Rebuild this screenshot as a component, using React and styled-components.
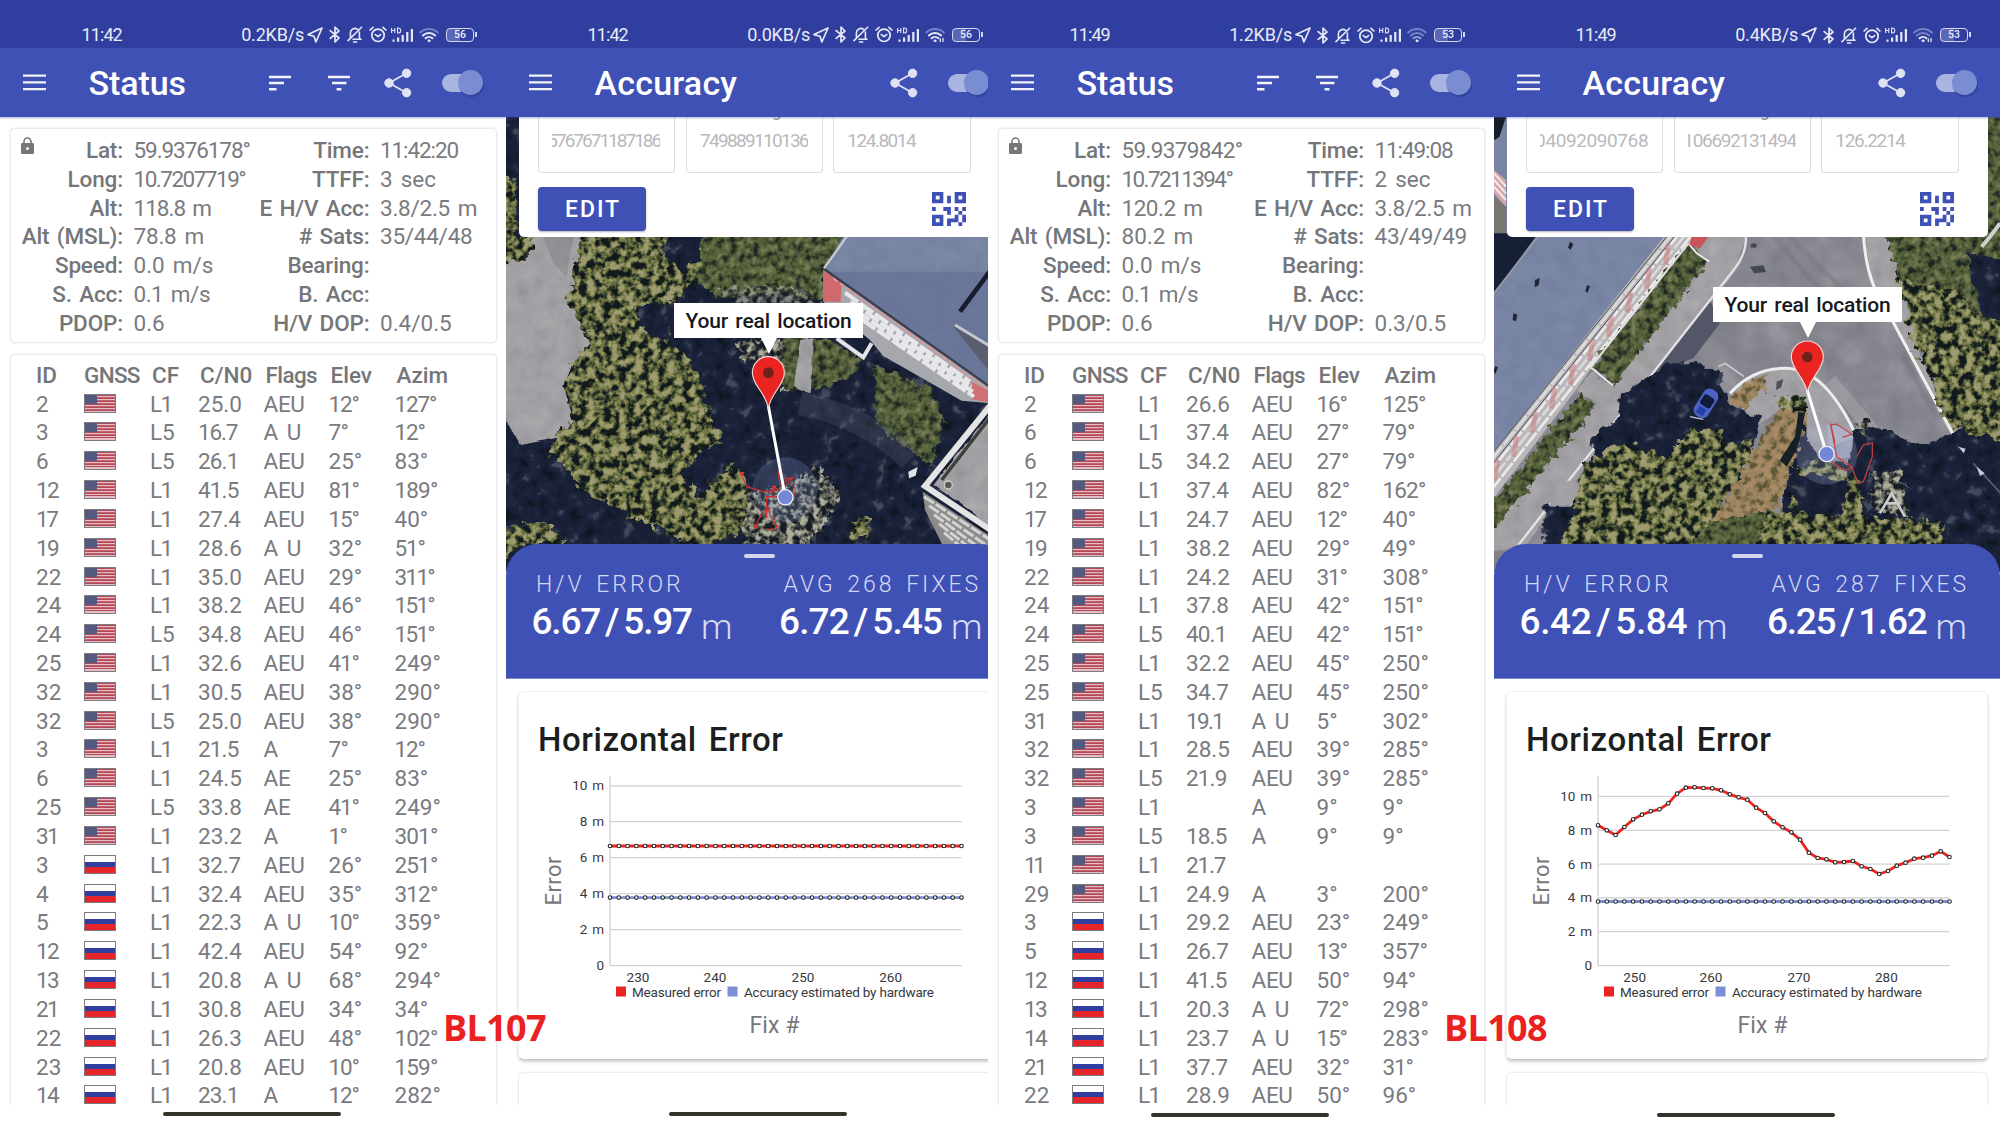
import React from "react";
import styled, { createGlobalStyle } from "styled-components";

const Global = createGlobalStyle`
  * { box-sizing: border-box; }
  html, body { margin: 0; padding: 0; background: #fff; }
  body { font-family: Roboto, "Open Sans", sans-serif; color: #6f7073; overflow: hidden; }
  svg { display: block; flex: none; }
`;

const Board = styled.main`
  display: flex;
  position: relative;
  width: 2000px;
  height: 1125px;
  overflow: hidden;
`;

const Phone = styled.section`
  display: flex;
  flex-direction: column;
  flex: none;
  width: ${(p) => p.$width}px;
  height: 1125px;
  overflow: hidden;
  background: #fff;
`;

const Screen = styled.div`
  display: flex;
  flex-direction: column;
  flex: none;
  width: 506px;
  height: 1105px;
  overflow: hidden;
`;

/* ---------- status bar ---------- */

const StatusBar = styled.header`
  display: flex;
  align-items: center;
  flex: none;
  height: 48px;
  padding: ${(p) => (p.$low ? 22.5 : 21)}px 29px 0 81.5px;
  background: #303f9f;
  color: #e9ebf5;
  font-size: 18px;
  line-height: 26px;
`;

const Clock = styled.span`
  letter-spacing: -0.9px;
`;

const Speed = styled.span`
  margin-left: auto;
  margin-right: 3px;
  letter-spacing: -0.2px;
`;

const Tray = styled.div`
  display: flex;
  align-items: center;
`;

const TrayItem = styled.span`
  display: flex;
  margin-left: ${(p) => p.$gap || 0}px;
`;

const Battery = styled.span`
  display: flex;
  align-items: center;
  justify-content: center;
  position: relative;
  width: 28px;
  height: 14px;
  margin: 0 3px 0 7px;
  border: 1.5px solid #d5d8ee;
  border-radius: 4px;
  background: linear-gradient(90deg, #5a67b6 50%, transparent 50%);
  font-size: 10.5px;
  font-weight: 500;
  line-height: 10px;
  &::after {
    content: "";
    position: absolute;
    right: -4px;
    top: 3px;
    width: 2px;
    height: 5px;
    background: #d5d8ee;
  }
`;

/* ---------- app bar ---------- */

const AppBar = styled.div`
  display: flex;
  align-items: center;
  flex: none;
  position: relative;
  z-index: 2;
  height: 69px;
  padding: 0 24px 0 23px;
  background: #3f51b5;
  box-shadow: 0 1px 2px rgba(63, 81, 181, 0.45);
`;

const Title = styled.h1`
  margin: 1.5px auto 0 42.5px;
  color: #fff;
  font-size: 34px;
  font-weight: 500;
  line-height: 67.5px;
  letter-spacing: ${(p) => p.$track || 0}px;
`;

const Action = styled.span`
  display: flex;
  margin-left: ${(p) => p.$gap}px;
`;

const Toggle = styled.span`
  display: flex;
  align-items: center;
  justify-content: flex-end;
  width: 37px;
  height: 18px;
  margin: 0 3.5px 0 29.5px;
  border-radius: 9px;
  background: #aab4e1;
`;

const Thumb = styled.span`
  width: 25px;
  height: 25px;
  flex: none;
  margin-right: -4px;
  border-radius: 50%;
  background: #7b8dd2;
  box-shadow: 1px 2px 1px #32429f;
`;

/* ---------- status page ---------- */

const StatusBody = styled.div`
  display: flex;
  flex-direction: column;
  gap: 11px;
  flex: 1;
  min-height: 0;
  padding: 11px 9.5px 0 10px;
`;

const Panel = styled.div`
  border: 1px solid #ececef;
  border-radius: 5px;
  box-shadow: 0 0 2px rgba(0, 0, 0, 0.14);
  background: #fff;
`;

const InfoPanel = styled(Panel)`
  position: relative;
  height: 215px;
  padding-top: 7px;
`;

const LockIcon = styled.svg`
  position: absolute;
  left: 10px;
  top: 8px;
`;

const InfoColumns = styled.div`
  display: grid;
  grid-template-columns: 112px minmax(0, 1fr) 120px ${(p) => p.$last}px;
  grid-auto-rows: 28.83px;
`;

const InfoLabel = styled.span`
  display: flex;
  justify-content: flex-end;
  font-size: 22.5px;
  font-weight: 500;
  line-height: 29px;
  letter-spacing: -0.15px;
  word-spacing: 2px;
  white-space: pre;
  color: #757679;
`;

const InfoValue = styled.span`
  padding-left: 10.5px;
  font-size: 22.5px;
  line-height: 29px;
  letter-spacing: ${(p) => p.$track}px;
  word-spacing: 2.5px;
  white-space: pre;
  color: #7a7b7f;
`;

const TablePanel = styled(Panel)`
  flex: 1;
  min-height: 0;
  padding-top: 5.3px;
  border-bottom: none;
  border-radius: 5px 5px 0 0;
`;

const SatRow = styled.div`
  display: grid;
  grid-template-columns: 48px 66px 48px 65.5px 65px 66px 1fr;
  align-items: center;
  height: 28.83px;
  padding-left: 25px;
`;

const Cell = styled.span`
  font-size: 22.5px;
  line-height: 28px;
  letter-spacing: ${(p) => p.$track}px;
  word-spacing: 3.5px;
  white-space: pre;
  color: #7a7b7f;
`;

const HeadCell = styled.span`
  margin-left: ${(p) => p.$shift || 0}px;
  font-size: 22.5px;
  font-weight: 500;
  line-height: 28px;
  letter-spacing: ${(p) => p.$track || 0}px;
  white-space: nowrap;
  color: #757679;
`;

const FlagBox = styled.span`
  display: block;
  width: 32px;
  height: 19px;
  margin-top: -1px;
  border: 1px solid #7b7b80;
  background: ${(p) =>
    p.$country === "us"
      ? `linear-gradient(#54597f, #54597f) 0 0 / 12px 9px no-repeat,
         repeating-linear-gradient(180deg, #b04a58 0 1px, #e7bcc2 1px 2.3px, #c0616d 2.3px 2.9px)`
      : `linear-gradient(180deg, #fff 0 34%, #303f9f 34% 66%, #e5252a 66%)`};
`;

const NavArea = styled.footer`
  display: flex;
  flex: none;
  width: 506px;
  height: 20px;
  padding: ${(p) => (p.$low ? 8 : 7)}px 0 0 163px;
  background: #fff;
`;

const NavPill = styled.span`
  width: 178px;
  height: 4px;
  border-radius: 2px;
  background: #30352c;
`;

/* ---------- accuracy page ---------- */

const MapArea = styled.div`
  position: relative;
  flex: none;
  height: 455px;
`;

const MapArt = styled.svg`
  position: absolute;
  inset: 0;
`;

const TruthCard = styled.div`
  position: relative;
  width: 481px;
  height: 120px;
  margin-left: 12.5px;
  padding: 0 29px 0 19.5px;
  border-radius: 0 0 5px 5px;
  background: #fff;
`;

const Fields = styled.div`
  display: flex;
  gap: 10.5px;
  height: 56px;
`;

const Field = styled.div`
  flex: 1;
  min-width: 0;
  padding: 11px 14px 0 13px;
  border: 1.5px solid #dedee1;
  border-top: none;
  border-radius: 0 0 4px 4px;
  position: relative;
`;

const FieldText = styled.span`
  display: flex;
  justify-content: ${(p) => (p.$end ? "flex-end" : "flex-start")};
  overflow: hidden;
  font-size: 19px;
  line-height: 26px;
  letter-spacing: ${(p) => p.$track}px;
  color: #b9b9bd;
`;

const Caption = styled.span`
  position: absolute;
  left: 25px;
  top: -17px;
  font-size: 17px;
  line-height: 22px;
  white-space: nowrap;
  color: #8c8c90;
`;

const CardActions = styled.div`
  display: flex;
  align-items: center;
  justify-content: space-between;
  padding: 14px 5px 0 0;
`;

const EditButton = styled.button`
  width: 108px;
  height: 44px;
  padding: 1px 0 0 2px;
  border: none;
  border-radius: 4px;
  background: #3f51b5;
  box-shadow: 0 1px 2px rgba(0, 0, 0, 0.3);
  color: #fff;
  font: 500 23px/44px Roboto, sans-serif;
  letter-spacing: 2px;
`;

const Callout = styled.div`
  position: absolute;
  left: ${(p) => p.$x}px;
  top: ${(p) => p.$y}px;
  width: 189px;
  height: 35.5px;
  background: #fff;
  color: #17191c;
  font-size: 21px;
  font-weight: 500;
  line-height: 36px;
  text-align: center;
  white-space: nowrap;
  letter-spacing: -0.15px;
  word-spacing: 2.2px;
  &::after {
    content: "";
    position: absolute;
    left: 86.5px;
    top: 35px;
    border: 8px solid transparent;
    border-top: 16px solid #fff;
    border-bottom: none;
  }
`;

const Sheet = styled.div`
  position: relative;
  z-index: 1;
  flex: none;
  height: 135px;
  margin-top: -28.5px;
  padding-top: 10.5px;
  border-radius: 32px 32px 0 0;
  background: #3f51b5;
  border-bottom: 1px solid #7f8bd0;
`;

const Handle = styled.span`
  display: block;
  width: 31px;
  height: 4px;
  margin: 0 auto;
  border-radius: 2px;
  background: #d3d7ec;
`;

const Metrics = styled.div`
  display: grid;
  grid-template-columns: 247.5px 1fr;
  padding: 12px 0 0 30px;
`;

const MetricName = styled.div`
  color: #d3d8f0;
  font-size: 23px;
  font-weight: 300;
  line-height: 30px;
  letter-spacing: 3px;
  word-spacing: 3px;
  white-space: nowrap;
`;

const MetricValue = styled.div`
  display: flex;
  align-items: baseline;
  margin: -2.5px 0 0 -4.5px;
  color: #fff;
  font-size: 37px;
  font-weight: 500;
  line-height: 48px;
  letter-spacing: ${(p) => p.$track}px;
  white-space: nowrap;
`;

const Slash = styled.span`
  margin: 0 5px;
`;

const Unit = styled.span`
  position: relative;
  top: 5px;
  margin-left: 9px;
  font-size: 35.5px;
  font-weight: 300;
  letter-spacing: 0;
  color: #d9ddf2;
`;

const Charts = styled.div`
  display: flex;
  flex-direction: column;
  gap: 11.5px;
  flex: 1;
  padding: 12px 12.5px 0 12px;
`;

const ChartCard = styled.div`
  display: flex;
  flex-direction: column;
  height: 369.5px;
  flex: none;
  padding: 26px 0 0 20px;
  border: 1px solid #f0f0f2;
  border-bottom: 1.5px solid #c6c7cd;
  border-radius: 6px;
  box-shadow: 0 2px 3px rgba(0, 0, 0, 0.18);
`;

const NextCard = styled.div`
  flex: 1;
  border: 1px solid #ededf0;
  border-bottom: none;
  border-radius: 6px 6px 0 0;
  box-shadow: 0 0 2px rgba(0, 0, 0, 0.08);
`;

const ChartTitle = styled.h2`
  margin: 0 0 0 -1px;
  color: #1b1f20;
  font-size: 33px;
  font-weight: 500;
  line-height: 44px;
  letter-spacing: 0.6px;
  word-spacing: 3px;
`;

const Plot = styled.svg`
  margin: 3.7px 0 0 -33px;
  overflow: visible;
`;

const Tag = styled.span`
  position: absolute;
  left: ${(p) => p.$x}px;
  top: 1003px;
  z-index: 5;
  color: #eb211f;
  font: 700 36px/50px "Open Sans", "Noto Sans", sans-serif;
  letter-spacing: -0.7px;
`;

/* ---------- icons ---------- */

const stroke = { fill: "none", stroke: "#e6e8f5", strokeLinecap: "round", strokeLinejoin: "round" };

const ArrowIcon = () => (
  <svg width="16" height="16" viewBox="0 0 16 16" {...stroke} strokeWidth="1.7">
    <path d="M15 1 1 7.6l6 1.6 1.900 5.800z" />
  </svg>
);
const BluetoothIcon = () => (
  <svg width="12" height="17" viewBox="0 0 12 17" {...stroke} strokeWidth="1.7">
    <path d="M1.200 4.600 10 12l-4 3.800V1.200L10 5 1.200 12.400" />
  </svg>
);
const BellOffIcon = () => (
  <svg width="16" height="17" viewBox="0 0 16 17" {...stroke} strokeWidth="1.6">
    <path d="M3.400 11V6.800a4.500 4.500 0 0 1 7-3.600M12.400 6v6.200l1.600 1.100H6M14.600 1.200 1 14.600M6.600 16h3" />
  </svg>
);
const AlarmIcon = () => (
  <svg width="18" height="17" viewBox="0 0 18 17" {...stroke} strokeWidth="1.7">
    <circle cx="9" cy="9.300" r="6.200" />
    <path d="m6.300 8.600 2.700 2 2.600-2M1.100 4 4 1.300M16.900 4 14 1.300" />
  </svg>
);
const SignalIcon = () => (
  <svg width="23" height="16" viewBox="0 0 23 16" fill="#e6e8f5">
    <path d="M.6 1v5M.6 3.500h3M3.800 1v5M6.600 1v5h1.200q2-.4 2-2.500t-2-2.500H6" fill="none" stroke="#e6e8f5" strokeWidth="1.100" />
    <path d="M1.500 12.600h2v2.200h-2zM6 10.600h2.200v4.200H6zM10.600 8h2.200v6.800h-2.200zM15.200 5h2.200v9.800h-2.200zM19.800 2H22v12.800h-2.200z" />
  </svg>
);
const WifiIcon = ({ level, data }) => (
  <svg width="20" height="16" viewBox="0 0 20 16" {...stroke} strokeWidth="2">
    <path d="M1.200 5.500a12.500 12.500 0 0 1 17.600 0" stroke="#7782c4" />
    <path d="M3.900 8.500a8.700 8.700 0 0 1 12.200 0" stroke={level > 2 ? "#e6e8f5" : "#7782c4"} />
    <path d="M6.600 11.300a4.900 4.900 0 0 1 6.800 0" stroke={level > 1 ? "#e6e8f5" : "#98a1d4"} />
    <circle cx="10" cy="13.800" r="1" fill="#e6e8f5" strokeWidth="1" />
    {data && <path d="M15.300 12v2.600M18 11.500v3" strokeWidth="1.300" />}
  </svg>
);
const MenuIcon = () => (
  <svg width="23" height="17" viewBox="0 0 23 17" stroke="#f3f4fa" strokeWidth="2.200">
    <path d="M0 1.700h23M0 8.400h23M0 15.200h23" />
  </svg>
);
const SortIcon = () => (
  <svg width="22" height="16" viewBox="0 0 22 16" stroke="#f3f4fa" strokeWidth="2.500">
    <path d="M0 2h22M0 8.100h15M0 14.200h7.500" />
  </svg>
);
const FilterIcon = () => (
  <svg width="22" height="16" viewBox="0 0 22 16" stroke="#f3f4fa" strokeWidth="2.500">
    <path d="M0 2h22M4 8.100h14.500M8.600 14.200h4.800" />
  </svg>
);
const ShareIcon = () => (
  <svg width="28" height="30" viewBox="0 0 28 30" fill="#dfe2f2" stroke="#dfe2f2">
    <path d="M22.500 5.300 5 15l17.500 9.700" fill="none" strokeWidth="1.800" />
    <circle cx="22.600" cy="5.300" r="4.200" />
    <circle cx="5" cy="15" r="4.200" />
    <circle cx="22.600" cy="24.700" r="4.200" />
  </svg>
);
const QrIcon = () => (
  <svg width="34" height="34" viewBox="3 3 18 18" fill="#3f51b5">
    <path d="M3,11H5V13H3V11M11,5H13V9H11V5M9,11H13V15H11V13H9V11M15,11H17V13H19V11H21V13H19V15H21V19H19V21H17V19H13V21H11V17H15V15H17V13H15V11M19,19V15H17V19H19M15,3H21V9H15V3M17,5V7H19V5H17M3,3H9V9H3V3M5,5V7H7V5H5M3,15H9V21H3V15M5,17V19H7V17H5Z" />
  </svg>
);

/* Average tracking that narrows strings rich in thin digits. */
const tracking = (text) => {
  const ones = (text.match(/1/g) || []).length;
  const sevens = (text.match(/7/g) || []).length;
  const base = text.length > 10 ? -0.55 : text.length > 7 ? -0.25 : 0;
  return text.length ? base - (ones * 3.4 + sevens * 1.2) / text.length : 0;
};

function TopBar({ time, speed, battery, low, wifi, data }) {
  return (
    <StatusBar $low={low}>
      <Clock>{time}</Clock>
      <Speed>{speed}</Speed>
      <Tray>
        <ArrowIcon />
        <TrayItem $gap={6}><BluetoothIcon /></TrayItem>
        <TrayItem $gap={6}><BellOffIcon /></TrayItem>
        <TrayItem $gap={6}><AlarmIcon /></TrayItem>
        <TrayItem $gap={4}><SignalIcon /></TrayItem>
        <TrayItem $gap={5}><WifiIcon level={wifi} data={data} /></TrayItem>
        <Battery>{battery}</Battery>
      </Tray>
    </StatusBar>
  );
}

function StatusPhone({ bar, info, sats, last, low }) {
  return (
    <Phone $width={506}>
      <Screen>
        <TopBar {...bar} low={low} />
        <AppBar>
          <MenuIcon />
          <Title $track={-0.1}>Status</Title>
          <Action $gap={0}><SortIcon /></Action>
          <Action $gap={37}><FilterIcon /></Action>
          <Action $gap={34}><ShareIcon /></Action>
          <Toggle><Thumb /></Toggle>
        </AppBar>
        <StatusBody>
          <InfoPanel>
            <LockIcon width="13" height="17" viewBox="0 0 13 17">
              <path d="M3 7V4.500a3.500 3.500 0 0 1 7 0V7" fill="none" stroke="#77777a" strokeWidth="1.600" />
              <rect y="6" width="13" height="11" rx="1.200" fill="#77777a" />
              <circle cx="6.500" cy="11.500" r="1.500" fill="#fff" />
            </LockIcon>
            <InfoColumns $last={last}>
              {info.map(([a, b, c, d]) => (
                <React.Fragment key={a}>
                  <InfoLabel>{a}</InfoLabel>
                  <InfoValue $track={tracking(b)}>{b}</InfoValue>
                  <InfoLabel>{c}</InfoLabel>
                  <InfoValue $track={tracking(d)}>{d}</InfoValue>
                </React.Fragment>
              ))}
            </InfoColumns>
          </InfoPanel>
          <TablePanel>
            <SatRow>
              <HeadCell>ID</HeadCell>
              <HeadCell $track={-0.7}>GNSS</HeadCell>
              <HeadCell $shift={2}>CF</HeadCell>
              <HeadCell $shift={2}>C/N0</HeadCell>
              <HeadCell $shift={2} $track={-0.6}>Flags</HeadCell>
              <HeadCell $shift={2}>Elev</HeadCell>
              <HeadCell $shift={2}>Azim</HeadCell>
            </SatRow>
            {sats.map(([id, country, cf, cn, flags, elev, azim], i) => (
              <SatRow key={i}>
                <Cell $track={tracking(id)}>{id}</Cell>
                <FlagBox $country={country} />
                <Cell $track={tracking(cf)}>{cf}</Cell>
                <Cell $track={tracking(cn)}>{cn}</Cell>
                <Cell $track={-0.3}>{flags}</Cell>
                <Cell $track={tracking(elev)}>{elev}</Cell>
                <Cell $track={tracking(azim)}>{azim}</Cell>
              </SatRow>
            ))}
          </TablePanel>
        </StatusBody>
      </Screen>
      <NavArea $low={low}><NavPill /></NavArea>
    </Phone>
  );
}

function Texture({ id, freq, seed, r, g, b, gain = 3, rough = 26 }) {
  return (
    <filter id={id} x="-5%" y="-5%" width="110%" height="110%" colorInterpolationFilters="sRGB">
      <feTurbulence type="fractalNoise" baseFrequency={freq} numOctaves="3" seed={seed} result="n" />
      <feColorMatrix
        in="n"
        values={`${gain} 0 0 0 ${0.5 - gain / 2} ${gain} 0 0 0 ${0.5 - gain / 2} ${gain} 0 0 0 ${0.5 - gain / 2} 0 0 0 0 1`}
      />
      <feComponentTransfer result="c">
        <feFuncR type="table" tableValues={r} />
        <feFuncG type="table" tableValues={g} />
        <feFuncB type="table" tableValues={b} />
      </feComponentTransfer>
      <feDisplacementMap in="SourceAlpha" in2="n" scale={rough} xChannelSelector="G" yChannelSelector="B" result="s" />
      <feComposite in="c" in2="s" operator="in" />
    </filter>
  );
}

function Textures({ p }) {
  return (
    <defs>
      <Texture id={p + "tree"} freq="0.042" seed="4" rough={50} gain={3.2} r="0.07 0.18 0.38 0.5 0.62" g="0.1 0.22 0.41 0.51 0.61" b="0.11 0.16 0.24 0.31 0.44" />
      <Texture id={p + "grass"} freq="0.045" seed="9" rough={40} gain={2} r="0.12 0.22 0.32 0.38 0.48" g="0.15 0.26 0.37 0.42 0.49" b="0.14 0.17 0.22 0.27 0.34" />
      <Texture id={p + "pale"} freq="0.05" seed="13" rough={50} gain={3} r="0.08 0.16 0.36 0.52 0.68" g="0.11 0.18 0.37 0.52 0.68" b="0.14 0.2 0.34 0.46 0.62" />
      <Texture id={p + "night"} freq="0.025" seed="2" rough={40} gain={1.8} r="0.06 0.09 0.1 0.12 0.26" g="0.09 0.12 0.13 0.15 0.29" b="0.13 0.2 0.22 0.24 0.36" />
      <Texture id={p + "road"} freq="0.012" seed="6" rough={10} gain={1.4} r="0.48 0.51 0.53 0.56 0.6" g="0.48 0.51 0.53 0.56 0.59" b="0.52 0.54 0.57 0.59 0.62" />
      <Texture id={p + "walk"} freq="0.02" seed="8" rough={14} gain={1.2} r="0.58 0.61 0.64 0.66 0.69" g="0.58 0.61 0.63 0.65 0.68" b="0.59 0.62 0.65 0.66 0.69" />
      <Texture id={p + "roof"} freq="0.02" seed="5" rough={0} gain={1} r="0.45 0.47 0.5" g="0.5 0.52 0.55" b="0.61 0.64 0.66" />
      <Texture id={p + "earth"} freq="0.045" seed="21" rough={46} gain={2.6} r="0.38 0.5 0.6 0.63 0.66" g="0.34 0.44 0.51 0.53 0.55" b="0.23 0.3 0.37 0.38 0.4" />
    </defs>
  );
}

function Pin({ x, y, dx, dy }) {
  return (
    <g>
      <path d={`M${x} ${y + 100}L${dx} ${dy}`} stroke="#fff" strokeWidth="9" />
      <path
        d={`M${x} ${y + 108}c-6-46-48-70-48-108a48 48 0 0 1 96 0c0 38-42 62-48 108z`}
        fill="#ea2420"
        stroke="#eed9d8"
        strokeWidth="3.500"
      />
      <circle cx={x} cy={y} r="16" fill="#6b221d" />
      <circle cx={dx} cy={dy} r="23" fill="#7387d6" stroke="#eceef8" strokeWidth="4" />
    </g>
  );
}

function CourtyardMap() {
  return (
    <MapArt width="506" height="455" viewBox="18 -339 1518 1365">
      <Textures p="a" />
      <rect x="0" y="-339" width="1560" height="1400" fill="#172036" />
      <path d="M-20-340H1560V1060H-20z" filter="url(#anight)" />
      <path d="M100 10H265L218 190 240 265 272 340 218 400 192 470 220 570 190 620 60 645 0 540V80z" filter="url(#awalk)" />
      <path d="M130 20 220 20 200 140 160 100z" fill="#6f7076" opacity=".35" />
      <path d="M-10-170 50-140V20H108L80 85-10 110z" filter="url(#atree)" />
      <path d="M590 0H1050L975 110 975 215 800 190 650 205 590 150z" filter="url(#agrass)" />
      <path d="M245 0H590L600 130 540 200 500 240 520 350 600 430 620 530 670 640 610 650 540 730 590 800 700 700 755 790 730 900 600 960 490 900 350 840 270 790 150 670 172 612 220 570 192 470 218 400 272 340 205 210z" filter="url(#atree)" />
      <path d="M500 0H600V90L540 130 500 80zM420 230 540 230 500 330 430 300z" filter="url(#anight)" />
      <path d="M715 330 850 320 880 480 840 490 840 400 720 390z" filter="url(#apale)" />
      <path d="M650 170 900 170 960 220 960 240 700 225z" filter="url(#apale)" opacity=".7" />
      <path d="M850 320 990 330 1085 385 1060 440 960 475 850 480z" filter="url(#agrass)" />
      <path d="M900 330 942 325 932 490 882 470z" filter="url(#awalk)" />
      <path d="M1120 410 1290 470 1335 570 1290 705 1130 585z" filter="url(#agrass)" />
      <path d="M900 520Q1100 560 1230 690" stroke="#5a6075" strokeWidth="70" opacity=".3" fill="none" />
      <path d="M740 790 850 770 960 705 1020 800 975 890 900 960H730z" filter="url(#apale)" />
      <path d="M1050 880 1100 860 1110 920 1060 930zM0 900 130 870 200 940 60 940 20 990H0z" filter="url(#atree)" />
      <path d="M1225 725l28-14-6 26-20 8z" fill="#dfe2e6" />
      {/* upper building */}
      <path d="M1040 0H1560V540L975 118z" filter="url(#aroof)" />
      <path d="M985 125 1560 125V540z" fill="#5f6b91" opacity=".55" />
      <path d="M1040 20 972 115" stroke="#c9cbd3" strokeWidth="7" />
      <path d="M1480 110 1380 245" stroke="#171d2c" strokeWidth="14" />
      <path d="M1370 290 1480 350V440L1360 290z" fill="#5a5f70" />
      <path d="M1365 285 1480 355" stroke="#c5c7cf" strokeWidth="9" />
      <path d="M970 120 1480 480V520L1385 512 1150 378 1110 330 970 215z" fill="#a6a8ae" />
      <path d="M970 120 1025 160 1022 215H970z" fill="#d0696e" />
      <path d="M1415 455 1480 490V520L1415 508z" fill="#cf7076" />
      {[0, 1, 2, 3].map((i) => (
        <path key={i} d={`M${1035 + i * 17} ${188 + i * 27}L${1410 + i * 4} ${455 + i * 15}`} stroke="#e7e7ea" strokeWidth="12" strokeDasharray="48 7" />
      ))}
      <path d="M975 118 1480 478" stroke="#3c4152" strokeWidth="7" />
      <path d="M1000 145 1480 490" stroke="#dc959a" strokeWidth="6" strokeDasharray="16 9" />
      <path d="M1010 325 1090 382 1115 340" fill="none" stroke="#e3e4e7" strokeWidth="12" />
      <path d="M1045 310 1110 330 1085 368z" fill="#171f35" />
      {/* lower building */}
      <path d="M1480 540 1300 765 1480 890z" filter="url(#awalk)" />
      <path d="M1325 750 1480 550" stroke="#3c4138" strokeWidth="10" />
      <path d="M1480 515 1275 768 1480 905" fill="none" stroke="#e4e4e4" strokeWidth="18" />
      <path d="M1268 785 1480 925V1030H1370L1275 840z" fill="#8d8b8b" />
      {[0, 1, 2, 3, 4].map((i) => (
        <path key={i} d={`M${1272 + i * 15} ${800 + i * 27}L1490 ${942 + i * 25}`} stroke="#d5d2d2" strokeWidth="9" strokeDasharray="36 6" />
      ))}
      <circle cx="1345" cy="765" r="12" fill="#5a5a52" stroke="#d0d0cc" strokeWidth="4" />
      <circle cx="855" cy="780" r="98" fill="#8f9ad5" opacity=".22" />
      <path
        d="M722 728 740 770 790 785 835 780 822 770 815 795M800 865V800L832 800 880 740 840 765 835 725 850 745 880 745M885 770V800M765 890 785 850 805 835 810 855 832 892M765 890 775 895M800 898H825"
        fill="none" stroke="#c9322f" strokeWidth="3.500" />
      <path d="M716 726h18l-8 14zM815 768h14l-8 14zM760 884h14l-5 14zM824 884h12l-5 14z" fill="#d93632" />
      <Pin x={805} y={428} dx={856} dy={802} />
    </MapArt>
  );
}

function RoundaboutMap() {
  return (
    <MapArt width="506" height="455" viewBox="12 -339 1518 1365">
      <Textures p="b" />
      <rect x="0" y="-339" width="1560" height="1400" fill="#85868f" />
      <path d="M-20-340H1560V1060H-20z" filter="url(#broad)" />
      <path d="M850 20 1060 260M900 20 1080 200M1240 380 1340 560" stroke="#6f7079" strokeWidth="16" opacity=".3" />
      <path d="M0-339H60V40H0z" fill="#7884a3" />
      <path d="M12-339h36l-20 60-16 10z" fill="#161d2a" />
      <path d="M12-180 48-150V-70L12-110z" fill="#dba4a8" />
      <path d="M12-170 48-130M12-150 48-110M12-130 48-90" stroke="#eee" strokeWidth="6" />
      <path d="M12-100 48-70V21H12z" fill="#77766f" />
      {/* long roof */}
      <path d="M0 10H160L0 215z" fill="#172036" />
      <path d="M145 10H545L0 690V205z" filter="url(#broof)" />
      <path d="M148 15 0 205" stroke="#9a9ca6" strokeWidth="5" />
      <path d="M240 35l10 8-8 16-8-6zM135 150l14-6-3 22-12 6zM292 165l8 4-8 20-6-6zM70 250l12 4-4 20-10-4zM16 408l8 4-8 20-6-8z" fill="#1f2534" />
      <path d="M530 10H625L580 60 300 420 250 490 0 820V680z" fill="#b9b7ba" />
      {[0, 1, 2, 3].map((i) => (
        <path key={i} d={`M${545 + i * 20} 15L0 ${695 + i * 30}`} stroke={i % 2 ? "#ece9ea" : "#dcd9da"} strokeWidth="8" strokeDasharray="52 6" />
      ))}
      <path d="M530 20 0 680M553 20 0 712" stroke="#4a4d58" strokeWidth="3" />
      {[0, 1, 2, 3, 4, 5, 6, 7, 8, 9].map((i) => (
        <path key={i} d={`M${536 - i * 57} ${42 + i * 72}l-10 62`} stroke="#cc7f82" strokeWidth="15" opacity=".6" />
      ))}
      {/* footpath */}
      <path d="M650 10H770L742 110 95 960H0V900L320 520 260 480 305 425 365 470 655 95 620 60z" filter="url(#bwalk)" />
      <path d="M595 40 655 95 370 468 302 412z" filter="url(#bgrass)" />
      <path d="M270 490 312 535 0 915V825z" filter="url(#bgrass)" />
      <path d="M595 40 302 412 368 466M595 40 620 70 658 95" fill="none" stroke="#e6e4e5" strokeWidth="6" />
      <path d="M605 21H655L630 55 598 45z" fill="#c8555a" />
      <path d="M690 280 610 385 520 420 470 455 660 210z" fill="#525666" />
      <path d="M768 15Q770 70 735 115L85 945" fill="none" stroke="#e2e2e4" strokeWidth="7" />
      {/* right kerb and park */}
      <path d="M1120 10H1210L1240 180 1280 340 1360 560 1420 610 1380 610 1150 165z" filter="url(#bwalk)" />
      <path d="M1120 10Q1125 100 1150 165L1388 610" fill="none" stroke="#f0f0f1" strokeWidth="9" />
      <path d="M1190 0H1560V640L1440 620 1350 560 1330 440 1270 350 1235 180z" filter="url(#btree)" />
      <path d="M1190 0H1560V260L1470 270 1400 180 1230 150z" filter="url(#bgrass)" />
      <path d="M1430 60 1560 100V280L1470 250z" filter="url(#bnight)" />
      <path d="M1480-339H1560V30H1480z" filter="url(#bgrass)" />
      <path d="M1530-20 1500 20 1475 50" stroke="#cfcfd0" strokeWidth="12" fill="none" />
      {/* island */}
      <path d="M720 490Q790 412 890 415 1010 415 1100 620L950 680 900 520 810 580 720 510z" filter="url(#bwalk)" />
      <path d="M720 490Q790 412 890 415 1005 418 1095 610" fill="none" stroke="#ededee" strokeWidth="9" />
      <path d="M685 410 705 400 762 440" fill="none" stroke="#c9cacd" strokeWidth="5" />
      <path d="M725 490 820 430 830 470 760 540 725 515z" filter="url(#bearth)" />
      <path d="M860 455l20-8-6 25-16 8zM780 110l40-4 8 20-36 4zM785 40l16 2-4 12-16-2z" fill="#2a2e38" opacity=".7" />
      <path d="M1020 450 1180 640" stroke="#a3a3a6" strokeWidth="40" opacity=".6" />
      {/* shade and trees */}
      <path d="M390 500 530 400 620 400 700 430 710 520 812 560 790 640 720 720 560 720 300 720 310 620 385 560z" filter="url(#bnight)" />
      <path d="M1090 600 1180 590 1300 650 1390 600 1560 640V1060H850L880 780 930 560 960 640 1000 700 1080 700z" filter="url(#bnight)" />
      <path d="M160 830 260 800 290 960H160z" filter="url(#bnight)" />
      <path d="M190 760 255 750 275 790 240 830 180 830z" filter="url(#bwalk)" />
      <path d="M280 700 400 640 540 680 600 600 690 600 720 640 790 640 740 760 690 840 900 840 920 720 1000 680 1110 760 1120 860 1350 880 1380 970 200 970 250 850z" filter="url(#btree)" />
      <path d="M900 720 1080 760 1050 860 920 850z" filter="url(#bnight)" />
      <path d="M870 530 955 540 870 830 800 850 650 890 710 800 780 680z" filter="url(#bearth)" />
      <path d="M650 885 770 850 830 850 800 960 600 960z" filter="url(#bgrass)" />
      <path d="M850 500 950 500 950 545 890 540z" filter="url(#btree)" />
      <path d="M925 545 945 550 925 650 890 710 870 690 915 620z" fill="#161e26" />
      <path d="M1140 730 1230 720 1260 860 1150 850zM1090 580 1140 570 1130 620z" filter="url(#bpale)" />
      <path d="M1170 850 1205 790 1245 860M1190 820h40" fill="none" stroke="#c8cacd" strokeWidth="8" />
      <path d="M1450 700 1560 820" stroke="#596074" strokeWidth="5" />
      <path d="M1405 650l22 6-6 14zM1460 710l24 20-14 8z" fill="#c7cad2" />
      {/* parked car */}
      <g transform="translate(648 520) rotate(32)">
        <rect x="-24" y="-46" width="48" height="92" rx="20" fill="#4a63c4" />
        <rect x="-18" y="-24" width="36" height="34" rx="8" fill="#101a3c" />
        <path d="M-12 16h24v22h-24z" fill="#2740a8" />
      </g>
      <path d="M600 560 640 568" stroke="#c3c8dc" strokeWidth="4" />
      <circle cx="1010" cy="672" r="92" fill="#a9b4dd" opacity=".24" />
      <path d="M1010 585 1060 590 1090 620 1080 680 1020 690z" fill="#b9c6e6" opacity=".4" />
      <path
        d="M1022 690Q1050 720 1075 720L1085 710 1040 680 1022 585 1040 582 1085 612 1058 622M1085 712 1105 760 1120 755 1147 680V638L1120 645 1100 680M1022 580 1035 640"
        fill="none" stroke="#c9423d" strokeWidth="3.500" />
      <Pin x={952} y={381} dx={1010} dy={672} />
    </MapArt>
  );
}

function ErrorChart({ zero, ticks, xTicks, red, blue, top }) {
  const left = 104;
  const right = 455.5;
  const step = (right - left) / (red.length - 1);
  const axis = { fontFamily: "Roboto, sans-serif", fontSize: 13.5, fill: "#37393d" };
  return (
    <Plot width="506" height="272" viewBox="0 766 506 272">
      {ticks.map(([label, y]) => (
        <g key={label}>
          <path d={`M${left} ${y}H${right}`} stroke="#d3d3d7" strokeWidth="1.300" />
          <text x="98" y={y + 4.3} textAnchor="end" wordSpacing="1.500" {...axis}>{label}</text>
        </g>
      ))}
      <path d={`M${left} ${top}V${zero}`} stroke="#cfcfd3" strokeWidth="1.300" />
      {[[red, "#ea2420", 2.8], [blue, "#7b8fd4", 2.8]].map(([ys, color, w]) => (
        <g key={color}>
          <polyline points={ys.map((y, i) => `${left + i * step},${y}`).join(" ")} fill="none" stroke={color} strokeWidth={w} />
          {ys.map((y, i) => (
            <circle key={i} cx={left + i * step} cy={y} r="1.800" fill="#fff" stroke="#23282a" strokeWidth="1.100" />
          ))}
        </g>
      ))}
      {xTicks.map(([label, x]) => (
        <text key={label} x={x} y="983" textAnchor="middle" {...axis}>{label}</text>
      ))}
      <rect x="110" y="987.500" width="10" height="10" fill="#ea2420" />
      <text x="126" y="997.500" {...axis} textLength="89">Measured error</text>
      <rect x="221.500" y="987.500" width="10" height="10" fill="#7b8fd4" />
      <text x="238" y="997.500" {...axis} textLength="190">Accuracy estimated by hardware</text>
      <text transform="translate(54.500 882) rotate(-90)" textAnchor="middle" fontFamily="Roboto, sans-serif" fontSize="22" fill="#77787c" textLength="49">Error</text>
      <text x="268.500" y="1034" textAnchor="middle" fontFamily="Roboto, sans-serif" fontSize="23" fill="#77787c" textLength="50">Fix #</text>
    </Plot>
  );
}

function Metric({ name, a, b, track }) {
  return (
    <div>
      <MetricName>{name}</MetricName>
      <MetricValue $track={track}>
        {a}<Slash>/</Slash>{b}<Unit>m</Unit>
      </MetricValue>
    </div>
  );
}

function AccuracyPhone({ width, bar, low, fields, map, callout, metrics, chart }) {
  return (
    <Phone $width={width}>
      <Screen>
        <TopBar {...bar} low={low} data />
        <AppBar>
          <MenuIcon />
          <Title $track={0.2}>Accuracy</Title>
          <Action $gap={0}><ShareIcon /></Action>
          <Toggle><Thumb /></Toggle>
        </AppBar>
        <MapArea>
          {map}
          <TruthCard>
            <Fields>
              {fields.map(([caption, text, track], i) => (
                <Field key={i}>
                  <Caption>{caption}</Caption>
                  <FieldText $end={i < 2} $track={track}>{text}</FieldText>
                </Field>
              ))}
            </Fields>
            <CardActions>
              <EditButton>EDIT</EditButton>
              <QrIcon />
            </CardActions>
          </TruthCard>
          <Callout $x={callout[0]} $y={callout[1]}>Your real location</Callout>
        </MapArea>
        <Sheet>
          <Handle />
          <Metrics>
            {metrics.map((m) => <Metric key={m.name} {...m} />)}
          </Metrics>
        </Sheet>
        <Charts>
          <ChartCard>
            <ChartTitle>Horizontal Error</ChartTitle>
            <ErrorChart {...chart} />
          </ChartCard>
          <NextCard />
        </Charts>
      </Screen>
      <NavArea $low={low}><NavPill /></NavArea>
    </Phone>
  );
}

/* ---------- data ---------- */

const infoA = [
  ["Lat:", "59.9376178°", "Time:", "11:42:20"],
  ["Long:", "10.7207719°", "TTFF:", "3 sec"],
  ["Alt:", "118.8 m", "E H/V Acc:", "3.8/2.5 m"],
  ["Alt (MSL):", "78.8 m", "# Sats:", "35/44/48"],
  ["Speed:", "0.0 m/s", "Bearing:", ""],
  ["S. Acc:", "0.1 m/s", "B. Acc:", ""],
  ["PDOP:", "0.6", "H/V DOP:", "0.4/0.5"],
];
const infoB = [
  ["Lat:", "59.9379842°", "Time:", "11:49:08"],
  ["Long:", "10.7211394°", "TTFF:", "2 sec"],
  ["Alt:", "120.2 m", "E H/V Acc:", "3.8/2.5 m"],
  ["Alt (MSL):", "80.2 m", "# Sats:", "43/49/49"],
  ["Speed:", "0.0 m/s", "Bearing:", ""],
  ["S. Acc:", "0.1 m/s", "B. Acc:", ""],
  ["PDOP:", "0.6", "H/V DOP:", "0.3/0.5"],
];

const rows = (text) => text.trim().split("\n").map((line) => line.trim().split(","));

const satsA = rows(`
2,us,L1,25.0,AEU,12°,127°
3,us,L5,16.7,A U,7°,12°
6,us,L5,26.1,AEU,25°,83°
12,us,L1,41.5,AEU,81°,189°
17,us,L1,27.4,AEU,15°,40°
19,us,L1,28.6,A U,32°,51°
22,us,L1,35.0,AEU,29°,311°
24,us,L1,38.2,AEU,46°,151°
24,us,L5,34.8,AEU,46°,151°
25,us,L1,32.6,AEU,41°,249°
32,us,L1,30.5,AEU,38°,290°
32,us,L5,25.0,AEU,38°,290°
3,us,L1,21.5,A,7°,12°
6,us,L1,24.5,AE,25°,83°
25,us,L5,33.8,AE,41°,249°
31,us,L1,23.2,A,1°,301°
3,ru,L1,32.7,AEU,26°,251°
4,ru,L1,32.4,AEU,35°,312°
5,ru,L1,22.3,A U,10°,359°
12,ru,L1,42.4,AEU,54°,92°
13,ru,L1,20.8,A U,68°,294°
21,ru,L1,30.8,AEU,34°,34°
22,ru,L1,26.3,AEU,48°,102°
23,ru,L1,20.8,AEU,10°,159°
14,ru,L1,23.1,A,12°,282°
`);
const satsB = rows(`
2,us,L1,26.6,AEU,16°,125°
6,us,L1,37.4,AEU,27°,79°
6,us,L5,34.2,AEU,27°,79°
12,us,L1,37.4,AEU,82°,162°
17,us,L1,24.7,AEU,12°,40°
19,us,L1,38.2,AEU,29°,49°
22,us,L1,24.2,AEU,31°,308°
24,us,L1,37.8,AEU,42°,151°
24,us,L5,40.1,AEU,42°,151°
25,us,L1,32.2,AEU,45°,250°
25,us,L5,34.7,AEU,45°,250°
31,us,L1,19.1,A U,5°,302°
32,us,L1,28.5,AEU,39°,285°
32,us,L5,21.9,AEU,39°,285°
3,us,L1,,A,9°,9°
3,us,L5,18.5,A,9°,9°
11,us,L1,21.7,,,
29,us,L1,24.9,A,3°,200°
3,ru,L1,29.2,AEU,23°,249°
5,ru,L1,26.7,AEU,13°,357°
12,ru,L1,41.5,AEU,50°,94°
13,ru,L1,20.3,A U,72°,298°
14,ru,L1,23.7,A U,15°,283°
21,ru,L1,37.7,AEU,32°,31°
22,ru,L1,28.9,AEU,50°,96°
`);

const flat = (y) => Array.from({ length: 41 }, () => y);

const chartA = {
  zero: 966.7,
  top: 777,
  ticks: [["10 m", 787], ["8 m", 822.6], ["6 m", 858.7], ["4 m", 894.7], ["2 m", 930.6], ["0", 966.7]],
  xTicks: [["230", 132], ["240", 209], ["250", 297], ["260", 384.6]],
  red: flat(847),
  blue: flat(898.6),
};
const chartB = {
  zero: 966.7,
  top: 777,
  ticks: [["10 m", 797.4], ["8 m", 831.3], ["6 m", 865.2], ["4 m", 899], ["2 m", 932.6], ["0", 966.7]],
  xTicks: [["250", 140.6], ["260", 217], ["270", 305], ["280", 392.4]],
  red: [259, 274, 288, 264, 241, 227, 217, 211, 193, 164, 146, 145, 147, 148, 154, 166, 175, 182, 206, 222, 247,
    265, 280, 302, 341, 357, 361, 370, 369, 366, 382, 390, 405, 396, 380, 371, 359, 356, 350, 337, 354]
    .map((v) => 740 + v / 3),
  blue: flat(902.5),
};

export default function App() {
  return (
    <Board>
      <Global />
      <StatusPhone
        bar={{ time: "11:42", speed: "0.2KB/s", battery: "56", wifi: 3 }}
        info={infoA} sats={satsA} last={126} />
      <AccuracyPhone
        width={482}
        bar={{ time: "11:42", speed: "0.0KB/s", battery: "56", wifi: 3 }}
        fields={[["Real latitude", "5767671187186", -2], ["Real longitude", "749889110136", -1.7], ["Real altitude", "124.8014", -1.5]]}
        map={<CourtyardMap />}
        callout={[168, 185.5]}
        metrics={[{ name: "H/V ERROR", a: "6.67", b: "5.97", track: -1.2 }, { name: "AVG 268 FIXES", a: "6.72", b: "5.45", track: -0.9 }]}
        chart={chartA} />
      <StatusPhone
        low
        bar={{ time: "11:49", speed: "1.2KB/s", battery: "53", wifi: 1 }}
        info={infoB} sats={satsB} last={119.5} />
      <AccuracyPhone
        width={506}
        low
        bar={{ time: "11:49", speed: "0.4KB/s", battery: "53", wifi: 2 }}
        fields={[["Real latitude", "04092090768", -0.4], ["Real longitude", "106692131494", -1.3], ["Real altitude", "126.2214", -1.3]]}
        map={<RoundaboutMap />}
        callout={[219, 169.5]}
        metrics={[{ name: "H/V ERROR", a: "6.42", b: "5.84", track: -0.4 }, { name: "AVG 287 FIXES", a: "6.25", b: "1.62", track: -1.3 }]}
        chart={chartB} />
      <Tag $x={443}>BL107</Tag>
      <Tag $x={1444}>BL108</Tag>
    </Board>
  );
}
